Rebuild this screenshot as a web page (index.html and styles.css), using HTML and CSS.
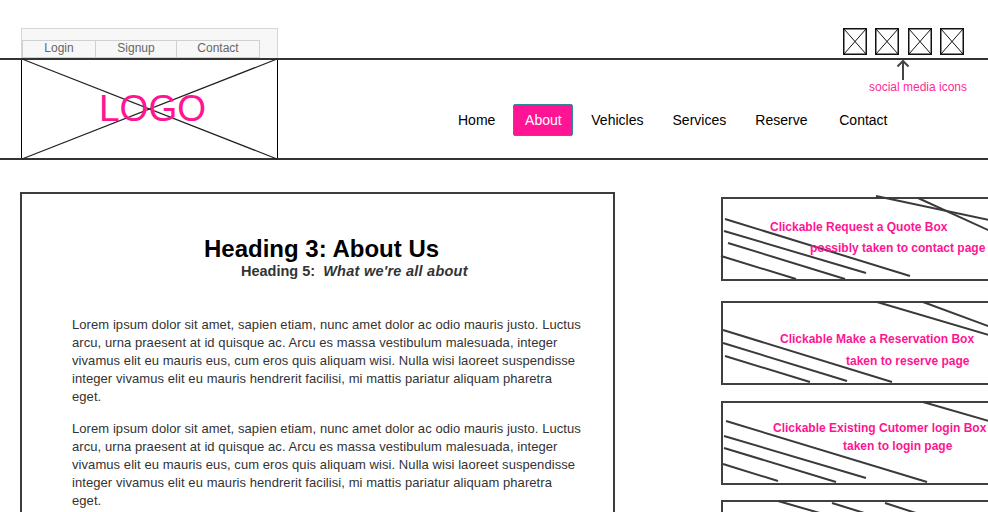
FILE: index.html
```html
<!DOCTYPE html>
<html lang="en">
<head>
<meta charset="utf-8">
<title>About Us - Wireframe</title>
<link rel="stylesheet" href="styles.css">
</head>
<body>
<header class="site-header">
  <div class="topbar">
    <div class="account">
      <nav class="account-tabs">
        <a class="tab tab-login" href="#">Login</a>
        <a class="tab tab-signup" href="#">Signup</a>
        <a class="tab tab-contact" href="#">Contact</a>
      </nav>
    </div>
    <div class="social">
      <svg class="social-icon" viewBox="0 0 24 27"><rect x="0.75" y="0.75" width="22.5" height="25.5"/><line x1="1" y1="1" x2="23" y2="26"/><line x1="23" y1="1" x2="1" y2="26"/></svg>
      <svg class="social-icon" viewBox="0 0 24 27"><rect x="0.75" y="0.75" width="22.5" height="25.5"/><line x1="1" y1="1" x2="23" y2="26"/><line x1="23" y1="1" x2="1" y2="26"/></svg>
      <svg class="social-icon" viewBox="0 0 24 27"><rect x="0.75" y="0.75" width="22.5" height="25.5"/><line x1="1" y1="1" x2="23" y2="26"/><line x1="23" y1="1" x2="1" y2="26"/></svg>
      <svg class="social-icon" viewBox="0 0 24 27"><rect x="0.75" y="0.75" width="22.5" height="25.5"/><line x1="1" y1="1" x2="23" y2="26"/><line x1="23" y1="1" x2="1" y2="26"/></svg>
    </div>
  </div>
  <div class="masthead">
    <div class="logo">
      <svg class="logo-x" viewBox="0 0 255 98" preserveAspectRatio="none"><line x1="0" y1="-1" x2="255" y2="99"/><line x1="0" y1="99" x2="255" y2="-1"/></svg>
      <span class="logo-text">LOGO</span>
    </div>
    <nav class="main-nav">
      <a class="nav-item nav-home" href="#">Home</a>
      <a class="nav-item nav-active" href="#">About</a>
      <a class="nav-item nav-wide nav-first-wide" href="#">Vehicles</a>
      <a class="nav-item nav-wide" href="#">Services</a>
      <a class="nav-item nav-wide" href="#">Reserve</a>
      <a class="nav-item nav-wide" href="#">Contact</a>
    </nav>
    <div class="annotation">
      <svg class="arrow" viewBox="0 0 101 21"><line x1="34" y1="2" x2="34" y2="21"/><polyline points="28.5,7.5 34,2 39.5,7.5"/></svg>
      <span class="annotation-text">social media icons</span>
    </div>
  </div>
</header>

<main class="content">
  <article class="about">
    <h3 class="about-title">Heading 3: About Us</h3>
    <h5 class="about-sub">Heading 5:&nbsp; <em>What we're all about</em></h5>
    <p>Lorem ipsum dolor sit amet, sapien etiam, nunc amet dolor ac odio mauris justo. Luctus arcu, urna praesent at id quisque ac. Arcu es massa vestibulum malesuada, integer vivamus elit eu mauris eus, cum eros quis aliquam wisi. Nulla wisi laoreet suspendisse integer vivamus elit eu mauris hendrerit facilisi, mi mattis pariatur aliquam pharetra eget.</p>
    <p>Lorem ipsum dolor sit amet, sapien etiam, nunc amet dolor ac odio mauris justo. Luctus arcu, urna praesent at id quisque ac. Arcu es massa vestibulum malesuada, integer vivamus elit eu mauris eus, cum eros quis aliquam wisi. Nulla wisi laoreet suspendisse integer vivamus elit eu mauris hendrerit facilisi, mi mattis pariatur aliquam pharetra eget.</p>
  </article>

  <aside class="cta-list">
    <a class="cta cta-quote" href="#">
      <svg class="hatch" viewBox="0 0 276 80"><line x1="2" y1="20" x2="187" y2="77"/><line x1="1" y1="32" x2="143" y2="74"/><line x1="5" y1="44" x2="122" y2="80"/><line x1="-2" y1="57" x2="73" y2="80"/><line x1="153" y1="-3" x2="276" y2="23"/><line x1="195" y1="-1" x2="276" y2="36"/></svg>
      <span class="cta-text">
        <span class="cta-line l1">Clickable Request a Quote Box</span>
        <span class="cta-line l2">possibly taken to contact page</span>
      </span>
    </a>
    <a class="cta cta-reserve" href="#">
      <svg class="hatch" viewBox="0 0 276 80"><line x1="154" y1="-1" x2="276" y2="35"/><line x1="200" y1="-1" x2="276" y2="27"/><line x1="0" y1="27" x2="169" y2="79"/><line x1="0" y1="40" x2="124" y2="78"/><line x1="2" y1="53" x2="87" y2="79"/></svg>
      <span class="cta-text">
        <span class="cta-line l1">Clickable Make a Reservation Box</span>
        <span class="cta-line l2">taken to reserve page</span>
      </span>
    </a>
    <a class="cta cta-login" href="#">
      <svg class="hatch" viewBox="0 0 276 80"><line x1="200" y1="-1" x2="276" y2="21"/><line x1="3" y1="18" x2="204" y2="79"/><line x1="1" y1="33" x2="143" y2="75"/><line x1="1" y1="45" x2="113" y2="79"/><line x1="0" y1="61" x2="55" y2="78"/></svg>
      <span class="cta-text">
        <span class="cta-line l1">Clickable Existing Cutomer login Box</span>
        <span class="cta-line l2">taken to login page</span>
      </span>
    </a>
    <a class="cta cta-more" href="#">
      <svg class="hatch" viewBox="0 0 276 80"><line x1="55" y1="-1" x2="135" y2="22"/><line x1="109" y1="1" x2="180" y2="23"/><line x1="162" y1="1" x2="230" y2="23"/></svg>
      <span class="cta-text"></span>
    </a>
  </aside>
</main>
</body>
</html>
```

FILE: styles.css
```css
html, body {
  margin: 0;
  padding: 0;
  overflow: hidden;
  background: #fff;
}

body {
  width: 988px;
  height: 512px;
  font-family: "Liberation Sans", Arial, sans-serif;
  color: #000;
}

a {
  text-decoration: none;
  color: inherit;
}

/* ---------- top bar ---------- */
.topbar {
  display: flex;
  height: 58px;
  border-bottom: 2px solid #333;
}

.account {
  box-sizing: border-box;
  margin: 28px 0 0 21px;
  width: 257px;
  height: 30px;
  padding-top: 11px;
  background: #f7f7f7;
  border: 1px solid #d6d6d6;
  border-bottom: 0;
}

.account-tabs {
  display: flex;
}

.tab {
  box-sizing: border-box;
  height: 18px;
  border: 1px solid #d0d0d0;
  margin-right: -1px;
  font-size: 12px;
  line-height: 15px;
  color: #666;
  text-align: center;
}

.tab-login { width: 74px; }
.tab-signup { width: 82px; }
.tab-contact { width: 84px; }

.social {
  display: flex;
  gap: 8.3px;
  margin: 28px 24px 0 auto;
}

.social-icon {
  width: 24px;
  height: 27px;
  fill: none;
  stroke: #111;
}

.social-icon rect { stroke-width: 1.5; }
.social-icon line { stroke-width: 1; }

/* ---------- masthead ---------- */
.masthead {
  position: relative;
  display: flex;
  height: 98px;
  border-bottom: 2px solid #333;
}

.logo {
  display: grid;
  box-sizing: border-box;
  width: 257px;
  height: 98px;
  margin-left: 21px;
  border-left: 1px solid #000;
  border-right: 1px solid #000;
}

.logo-x,
.logo-text {
  grid-area: 1 / 1;
}

.logo-x {
  width: 255px;
  height: 98px;
  overflow: visible;
  stroke: #222;
  stroke-width: 1.2;
}

.logo-text {
  align-self: center;
  justify-self: center;
  margin-left: 6px;
  font-size: 37px;
  line-height: 40px;
  color: #ff1493;
}

.main-nav {
  display: flex;
  align-items: center;
  height: 32px;
  margin: 44px 0 0 180px;
  font-size: 14px;
}

.nav-item {
  color: #000;
  line-height: 16px;
}

.nav-active {
  box-sizing: border-box;
  width: 60px;
  height: 32px;
  margin-left: 18px;
  line-height: 30px;
  text-align: center;
  color: #fff;
  background: #ff1493;
  border: 1px solid #2a8a9e;
  border-radius: 2px;
}

.nav-wide {
  width: 82px;
  text-align: center;
}

.nav-first-wide {
  margin-left: 3px;
}

.annotation {
  position: absolute;
  left: 869px;
  top: -1px;
  width: 101px;
  display: flex;
  flex-direction: column;
}

.arrow {
  width: 101px;
  height: 21px;
  fill: none;
  stroke: #444;
  stroke-width: 2;
}

.annotation-text {
  font-size: 12px;
  line-height: 14px;
  color: #ff2a95;
  white-space: nowrap;
}

/* ---------- content ---------- */
.content {
  display: flex;
  align-items: flex-start;
}

.about {
  flex-shrink: 0;
  box-sizing: border-box;
  width: 595px;
  margin: 32px 0 0 20px;
  padding: 41px 30px 40px 50px;
  border: 2px solid #3c3c3c;
}

.about-title {
  margin: 0;
  padding-left: 132px;
  font-size: 24px;
  line-height: 28px;
  font-weight: bold;
  color: #000;
}

.about-sub {
  margin: 0;
  padding-left: 169px;
  font-size: 14.5px;
  line-height: 16px;
  font-weight: bold;
  color: #333;
}

.about-sub em {
  font-style: italic;
  letter-spacing: 0.25px;
}

.about p {
  margin: 37px 0 0;
  font-size: 13px;
  line-height: 18px;
  letter-spacing: 0.07px;
  color: #333;
}

.about p + p {
  margin-top: 14px;
}

/* ---------- call-to-action boxes ---------- */
.cta-list {
  flex-shrink: 0;
  display: flex;
  flex-direction: column;
  margin: 37px 0 0 106px;
}

.cta {
  display: grid;
  box-sizing: border-box;
  width: 280px;
  height: 84px;
  border: 2px solid #404040;
  border-right: 0;
}

.cta-reserve { margin-top: 20px; }
.cta-login { margin-top: 16px; }
.cta-more { margin-top: 15px; }

.hatch,
.cta-text {
  grid-area: 1 / 1;
}

.hatch {
  width: 276px;
  height: 80px;
  overflow: visible;
  stroke: #3a3a3a;
  stroke-width: 2;
}

.cta-text {
  display: flex;
  flex-direction: column;
  align-items: flex-start;
  font-size: 12px;
  line-height: 14px;
  font-weight: bold;
  color: #ff1493;
  white-space: nowrap;
}

.cta-quote .cta-text { padding-top: 21px; }
.cta-quote .l1 { margin-left: 47px; }
.cta-quote .l2 { margin: 7px 0 0 87px; }

.cta-reserve .cta-text { padding-top: 29px; }
.cta-reserve .l1 { margin-left: 57px; }
.cta-reserve .l2 { margin: 8px 0 0 123px; }

.cta-login .cta-text { padding-top: 18px; }
.cta-login .l1 { margin-left: 50px; }
.cta-login .l2 { margin: 4px 0 0 120px; }
```
